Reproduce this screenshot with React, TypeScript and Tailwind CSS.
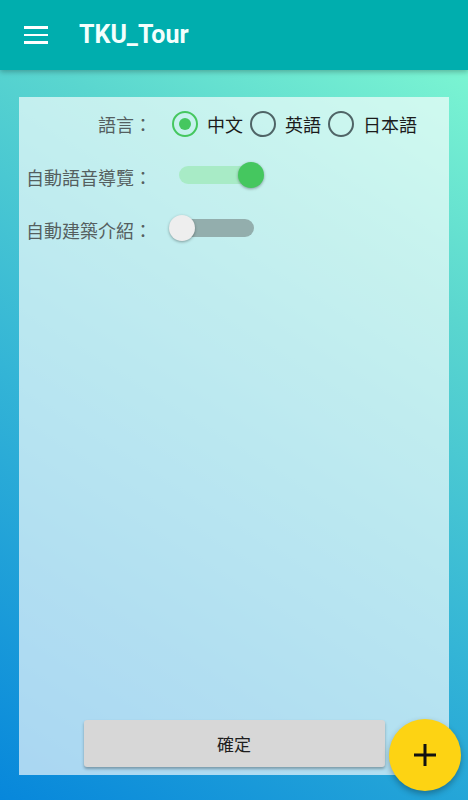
import React, { useState } from 'react';

const Radio = ({ checked, label, onClick }: { checked: boolean; label: string; onClick: () => void }) => (
  <button onClick={onClick} className="flex items-center gap-[9px]">
    <span
      className={`flex h-[26px] w-[26px] items-center justify-center rounded-full border-[2.5px] ${
        checked ? 'border-[#45c75f]' : 'border-[#4f6466]'
      }`}
    >
      {checked && <span className="h-[12px] w-[12px] rounded-full bg-[#45c75f]" />}
    </span>
    <span className="text-[18px] text-[#1c1c1c]">{label}</span>
  </button>
);

const Toggle = ({ on, onClick }: { on: boolean; onClick: () => void }) => (
  <button onClick={onClick} className="relative h-[26px] w-[95px]">
    <span
      className={`absolute left-[10px] top-[4px] h-[18px] w-[75px] rounded-full ${
        on ? 'bg-[#a8ebc6]' : 'bg-[#93aead]'
      }`}
    />
    <span
      className={`absolute top-0 h-[26px] w-[26px] rounded-full shadow-[0_1px_3px_rgba(0,0,0,0.35)] ${
        on ? 'left-[69px] bg-[#45c75f]' : 'left-0 bg-[#eeeeee]'
      }`}
    />
  </button>
);

export default function App() {
  const [lang, setLang] = useState('zh');
  const [voice, setVoice] = useState(true);
  const [intro, setIntro] = useState(false);

  return (
    <div
      className="relative flex h-[800px] w-[468px] flex-col overflow-hidden bg-[linear-gradient(212deg,#84fdd3_0%,#5ad6cf_30%,#34b5d6_60%,#0787db_100%)]"
      style={{ fontFamily: '"Noto Sans CJK TC", Roboto, sans-serif' }}
    >
      <header className="z-10 flex h-[70px] shrink-0 items-center bg-[#00aeae] shadow-[0_2px_5px_rgba(0,0,0,0.25)]">
        <div className="ml-[24px] flex w-[24px] flex-col gap-[5px]">
          <span className="h-[2.5px] bg-white" />
          <span className="h-[2.5px] bg-white" />
          <span className="h-[2.5px] bg-white" />
        </div>
        <h1 className="ml-[31px] text-[25px] font-bold text-[#f3fffd]" style={{ fontFamily: 'Roboto, sans-serif' }}>
          TKU_Tour
        </h1>
      </header>

      <main className="mx-[19px] mt-[27px] flex h-[678px] flex-col bg-white/65">
        <div className="flex flex-col gap-[27px] pl-[6px] pt-[14px]">
          <div className="flex h-[26px] items-center">
            <span className="w-[127px] text-right text-[18px] text-[#555f5f]">語言：</span>
            <div className="ml-[20px] flex items-center gap-[7px]">
              <Radio checked={lang === 'zh'} label="中文" onClick={() => setLang('zh')} />
              <Radio checked={lang === 'en'} label="英語" onClick={() => setLang('en')} />
              <Radio checked={lang === 'ja'} label="日本語" onClick={() => setLang('ja')} />
            </div>
          </div>
          <div className="flex h-[26px] items-center">
            <span className="w-[127px] text-right text-[18px] text-[#555f5f]">自動語音導覽：</span>
            <div className="ml-[17px]">
              <Toggle on={voice} onClick={() => setVoice(!voice)} />
            </div>
          </div>
          <div className="flex h-[26px] items-center">
            <span className="w-[127px] text-right text-[18px] text-[#555f5f]">自動建築介紹：</span>
            <div className="ml-[17px]">
              <Toggle on={intro} onClick={() => setIntro(!intro)} />
            </div>
          </div>
        </div>

        <div className="mt-auto mb-[8px] flex justify-center">
          <button className="h-[47px] w-[301px] rounded-[3px] bg-[#d7d7d7] text-[17px] text-[#1e1e1e] shadow-[0_2px_3px_rgba(0,0,0,0.3)]">
            確定
          </button>
        </div>
      </main>

      <button className="absolute left-[389px] top-[719px] flex h-[72px] w-[72px] items-center justify-center rounded-full bg-[#fdd313] shadow-[0_3px_6px_rgba(0,0,0,0.3)]">
        <svg width="24" height="24" viewBox="0 0 24 24">
          <path d="M12 1v22M1 12h22" stroke="#111" strokeWidth="3" />
        </svg>
      </button>
    </div>
  );
}
